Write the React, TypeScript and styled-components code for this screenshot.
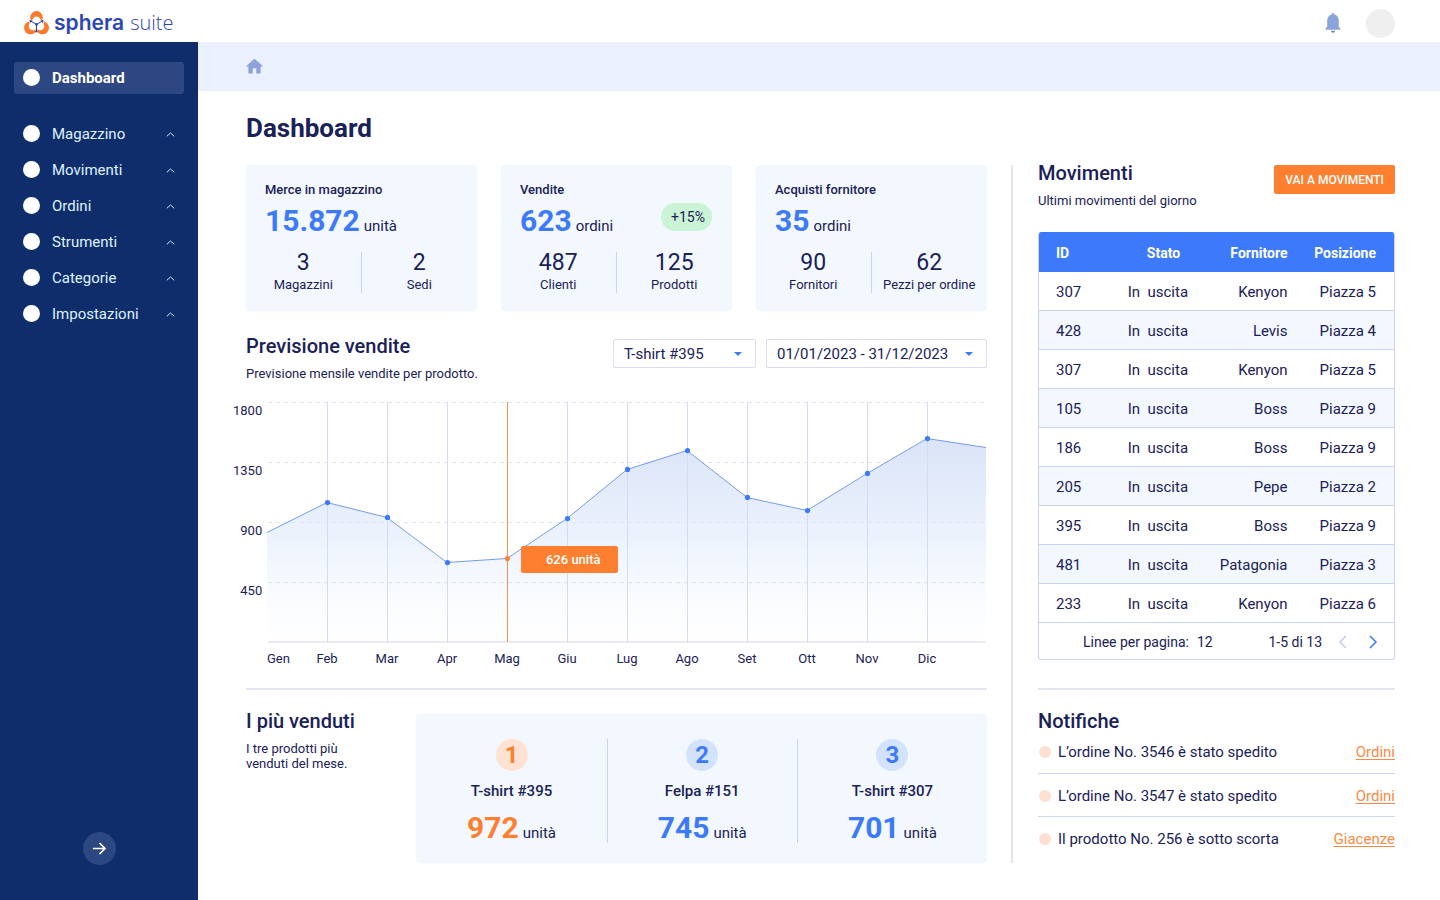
import React from "react";
import styled, { createGlobalStyle } from "styled-components";
import { MdHome } from "react-icons/md";

const c = {
  ink: "#1a2158",
  blue: "#3d7afb",
  orange: "#ff7f30",
  navy: "#0f2d6b",
  panel: "#f3f8ff",
  rule: "#e3e5f7",
  line: "#cdd3f0",
};

const GlobalStyle = createGlobalStyle`
  *, *::before, *::after { box-sizing: border-box; }
  body {
    margin: 0;
    background: #fff;
    color: ${c.ink};
    font-family: Roboto, "Liberation Sans", sans-serif;
    font-size: 15px;
  }
  h1, h2, h3, p, ul, dl, dd { margin: 0; padding: 0; }
  ul { list-style: none; }
  button, select { font-family: inherit; }
  svg { display: block; }
`;

/* ---------- shell ---------- */

const Shell = styled.div`
  min-height: 100vh;
  display: flex;
  flex-direction: column;
`;

const TopBar = styled.header`
  height: 42px;
  padding: 4px 45px 0 24px;
  display: flex;
  align-items: center;
  justify-content: space-between;
`;

const Brand = styled.a`
  display: flex;
  align-items: center;
  color: #2b45b5;
  text-decoration: none;
  line-height: 24px;
`;

const BrandStrong = styled.span`
  margin-left: 5px;
  font-family: Inter, sans-serif;
  font-size: 21px;
  font-weight: 600;
`;

const BrandLight = styled.span`
  margin-left: 6px;
  font-family: "Open Sans", sans-serif;
  font-size: 20px;
  font-weight: 300;
`;

const TopActions = styled.div`
  display: flex;
  align-items: center;
  gap: 25px;
`;

const PlainButton = styled.button`
  padding: 0;
  border: 0;
  background: none;
  color: inherit;
  cursor: pointer;
`;

const Avatar = styled(PlainButton)`
  width: 29px;
  height: 29px;
  border-radius: 50%;
  background: #efefef;
`;

const Body = styled.div`
  flex: 1;
  display: flex;
`;

const Sidebar = styled.nav`
  flex: none;
  width: 198px;
  padding: 20px 14px 35px;
  display: flex;
  flex-direction: column;
  align-items: stretch;
  background: ${c.navy};
`;

const NavList = styled.ul`
  margin-top: 24px;
  display: flex;
  flex-direction: column;
  gap: 4px;
`;

const NavItem = styled.button<{ $active?: boolean }>`
  width: 100%;
  height: 32px;
  padding: 0 9px;
  display: flex;
  align-items: center;
  gap: 12px;
  border: 0;
  border-radius: 3px;
  background: ${(p) => (p.$active ? "#2c4781" : "none")};
  color: ${(p) => (p.$active ? "#fff" : "#dff1ff")};
  font-size: 15px;
  font-weight: ${(p) => (p.$active ? 700 : 400)};
  text-align: left;
  cursor: pointer;
`;

const NavDot = styled.span`
  width: 17px;
  height: 17px;
  margin-bottom: 1px;
  border-radius: 50%;
  background: #fff;
`;

const NavLabel = styled.span`
  flex: 1;
`;

const ExpandButton = styled(PlainButton)`
  width: 33px;
  height: 33px;
  margin: auto auto 0;
  display: grid;
  place-items: center;
  border-radius: 50%;
  background: #2c4781;
  color: #fff;
`;

const Page = styled.div`
  flex: 1;
  min-width: 0;
`;

const Breadcrumb = styled.div`
  height: 49px;
  padding: 0 46px;
  display: flex;
  align-items: center;
  background: #eaf0fe;
`;

const HomeLink = styled.a`
  color: #8ba2dc;
`;

const Main = styled.main`
  padding: 21px 45px 37px 48px;
`;

const PageTitle = styled.h1`
  margin-bottom: 21px;
  font-size: 26px;
  line-height: 32px;
  font-weight: 700;
`;

const Columns = styled.div`
  display: grid;
  grid-template-columns: minmax(0, 741fr) minmax(0, 384fr);
  column-gap: 24px;
`;

const SideColumn = styled.div`
  padding-left: 25px;
  border-left: 2px solid ${c.rule};
`;

/* ---------- shared text ---------- */

const SectionTitle = styled.h2`
  font-size: 20px;
  line-height: 24px;
  font-weight: 500;
`;

const SectionNote = styled.p<{ $width?: number }>`
  max-width: ${(p) => (p.$width ? `${p.$width}px` : "none")};
  margin-top: 8px;
  font-size: 13px;
  line-height: ${(p) => (p.$width ? 15 : 16)}px;
`;

const Rule = styled.hr`
  height: 2px;
  margin: 0;
  border: 0;
  background: ${c.rule};
`;

const Amount = styled.p<{ $tone?: "orange" }>`
  line-height: 16px;
  white-space: nowrap;
  & > strong {
    margin-right: 4px;
    color: ${(p) => (p.$tone === "orange" ? c.orange : c.blue)};
    font-size: 30px;
    line-height: 30px;
    font-weight: 700;
  }
`;

/* ---------- summary cards ---------- */

const Cards = styled.div`
  display: grid;
  grid-template-columns: repeat(3, minmax(0, 1fr));
  gap: 24px;
`;

const Card = styled.section`
  padding: 16px 0 18px;
  border-radius: 4px;
  background: ${c.panel};
  box-shadow: 0 0 3px ${c.panel};
`;

const CardTitle = styled.h3`
  padding: 0 19px;
  font-size: 13px;
  line-height: 18px;
  font-weight: 500;
`;

const CardAmount = styled.div`
  height: 36px;
  margin: 4px 0 13px;
  padding: 0 20px 0 19px;
  display: flex;
  align-items: flex-start;
  justify-content: space-between;
  & > p {
    margin-top: 3px;
  }
`;

const Badge = styled.span`
  padding: 0 7px 0 10px;
  border-radius: 14px;
  background: #cbf3d5;
  font-size: 14px;
  line-height: 28px;
`;

const Stats = styled.dl`
  display: grid;
  grid-template-columns: 1fr 1fr;
  text-align: center;
`;

const Stat = styled.div`
  display: flex;
  flex-direction: column-reverse;
  gap: 3px;
  white-space: nowrap;
  &:first-child {
    border-right: 1px solid ${c.line};
  }
  & > dt {
    font-size: 13px;
    line-height: 16px;
  }
  & > dd {
    font-size: 23px;
    line-height: 22px;
  }
`;

/* ---------- forecast ---------- */

const ForecastHead = styled.div`
  margin: 23px 0 20px;
  display: flex;
  align-items: flex-start;
  justify-content: space-between;
`;

const Filters = styled.div`
  margin-top: 5px;
  display: flex;
  gap: 10px;
`;

const SelectBox = styled.label<{ $width: number }>`
  width: ${(p) => p.$width}px;
  height: 29px;
  padding-right: 13px;
  display: grid;
  grid-template-columns: minmax(0, 1fr);
  align-items: center;
  border: 1px solid #d9dcf6;
  border-radius: 2px;
  & > * {
    grid-area: 1 / 1;
  }
  & > svg {
    justify-self: end;
    pointer-events: none;
  }
`;

const Select = styled.select`
  width: 100%;
  height: 27px;
  padding: 0 0 0 10px;
  border: 0;
  appearance: none;
  background: none;
  color: ${c.ink};
  font-size: 15px;
`;

const Chart = styled.div`
  margin: 0 0 20px -13px;
  display: grid;
  grid-template-columns: 29px minmax(0, 1fr);
  column-gap: 5px;
  row-gap: 8px;
  font-size: 13px;
  line-height: 18px;
`;

const YAxis = styled.div`
  display: grid;
  grid-template-rows: repeat(4, 1fr);
  text-align: right;
`;

const Plot = styled.div`
  position: relative;
  & > svg {
    width: 100%;
    height: auto;
    overflow: visible;
  }
`;

const Tooltip = styled.div`
  position: absolute;
  top: 60%;
  left: calc(100% / 3 + 14px);
  padding: 0 17px 0 25px;
  border-radius: 2px;
  background: ${c.orange};
  color: #fff;
  font-weight: 500;
  line-height: 27px;
  white-space: nowrap;
`;

const XAxis = styled.div`
  grid-column: 2;
  display: grid;
  grid-template-columns: 1fr repeat(11, 2fr) 1fr;
  text-align: center;
  & > :first-child {
    text-align: left;
  }
`;

/* ---------- best sellers ---------- */

const BestSellers = styled.section`
  display: flex;
  justify-content: space-between;
`;

const BestIntro = styled.div`
  padding-top: 19px;
`;

const Podium = styled.ol`
  width: 77%;
  margin: 24px 0 0;
  padding: 25px 0 20px;
  display: grid;
  grid-template-columns: repeat(3, 1fr);
  border-radius: 4px;
  background: ${c.panel};
  box-shadow: 0 0 3px ${c.panel};
  list-style: none;
`;

const PodiumItem = styled.li`
  display: flex;
  flex-direction: column;
  align-items: center;
  & + & {
    border-left: 1px solid ${c.line};
  }
  & > h3 {
    margin: 10px 0 12px;
    font-size: 15px;
    line-height: 20px;
    font-weight: 500;
  }
`;

const Rank = styled.span<{ $first: boolean }>`
  width: 32px;
  border-radius: 50%;
  background: ${(p) => (p.$first ? "#ffe2d2" : "#d3e3fd")};
  color: ${(p) => (p.$first ? c.orange : c.blue)};
  font-size: 24px;
  line-height: 32px;
  font-weight: 700;
  text-align: center;
`;

/* ---------- movements ---------- */

const MovementsHead = styled.div`
  margin-bottom: 23px;
  display: flex;
  align-items: flex-start;
  justify-content: space-between;
`;

const MovementsIntro = styled.div`
  margin-top: -4px;
`;

const ActionButton = styled(PlainButton)`
  height: 29px;
  padding: 0 11px;
  border-radius: 2px;
  background: ${c.orange};
  color: #fff;
  font-size: 12px;
  font-weight: 500;
`;

const TableFrame = styled.div`
  margin-bottom: 28px;
  border: 1px solid ${c.line};
  border-top: 0;
  border-radius: 3px;
  overflow: hidden;
`;

const Table = styled.table`
  width: 100%;
  table-layout: fixed;
  border-collapse: separate;
  border-spacing: 0;
  text-align: right;
  white-space: pre;
  th,
  td {
    padding: 2px 0 0;
  }
  th {
    height: 40px;
    background: ${c.blue};
    color: #fff;
    font-size: 14px;
    font-weight: 700;
  }
  td {
    height: 39px;
    border-bottom: 1px solid #c9d5f0;
  }
  tbody tr:nth-child(even) {
    background: ${c.panel};
  }
  tr > :first-child {
    width: 20%;
    padding-left: 17px;
    text-align: left;
  }
  tr > :nth-child(2) {
    width: 22%;
  }
  th:nth-child(2) {
    padding-right: 8px;
  }
  tr > :nth-child(3) {
    width: 28%;
  }
  tr > :last-child {
    width: 30%;
    padding-right: 18px;
  }
`;

const Pager = styled.div`
  height: 36px;
  padding: 2px 16px 0 44px;
  display: flex;
  align-items: center;
  font-size: 14px;
  & > :nth-child(2) {
    margin-left: auto;
    margin-right: 16px;
  }
`;

const PageSize = styled.span`
  margin-left: 8px;
`;

const PagerButton = styled(PlainButton)<{ $tone: string }>`
  color: ${(p) => p.$tone};
  & + & {
    margin-left: 22px;
  }
`;

/* ---------- notifications ---------- */

const Notifications = styled.section`
  padding-top: 19px;
`;

const NoticeList = styled.ul`
  margin-top: -2px;
`;

const Notice = styled.li`
  height: 42px;
  display: flex;
  align-items: center;
  gap: 7px;
  & + & {
    height: 43px;
    padding-top: 2px;
    border-top: 1px solid ${c.line};
  }
`;

const NoticeDot = styled.span`
  width: 12px;
  height: 12px;
  margin: 0 0 1px 1px;
  border-radius: 50%;
  background: #ffe0d0;
`;

const NoticeLink = styled.a`
  margin-left: auto;
  color: #f98a45;
  text-underline-offset: 2px;
`;

/* ---------- drawings ---------- */

const LogoMark = () => (
  <svg width="25" height="24" viewBox="0 0 25 24" aria-hidden="true">
    <g fill="#fb7a2c">
      <circle cx="12.5" cy="6.4" r="6.3" />
      <circle cx="6.5" cy="16.8" r="6.5" />
      <circle cx="18.5" cy="16.8" r="6.5" />
    </g>
    <g fill="#fff">
      <circle cx="12.5" cy="9.8" r="4.300" />
      <circle cx="9" cy="15" r="4.300" />
      <circle cx="16" cy="15" r="4.300" />
      <path d="M12.5 16 10.300 24h4.400zM4 7.500l5 3-3 3zM21 7.500l-5 3 3 3z" />
    </g>
    <path stroke="#2b45b5" fill="none" d="M12.500 13.400V20M12.500 13.400 6.600 10M12.500 13.400 18.400 10" />
    <g fill="#2b45b5">
      <path d="M5.400 8.900l3.100.8-2.400 2.200zM19.600 8.900l-3.100.8 2.400 2.200zM12.500 18.400l1.700 2.800h-3.400z" />
      <circle cx="12.5" cy="13.4" r="1.3" />
    </g>
  </svg>
);

const Bell = () => (
  <svg width="16" height="20" viewBox="0 0 16 20" aria-hidden="true">
    <path
      fill="#8ba5da"
      d="M8 0a1.3 1.3 0 0 0-1.3 1.4C4 2 2.2 4.2 2.2 7v6.6L.6 15.4v1.3h14.8v-1.3l-1.6-1.8V7c0-2.8-1.8-5-4.5-5.6A1.3 1.3 0 0 0 8 0z"
    />
    <path fill="#7486b0" d="M5.9 17.8h4.2a2.1 1.9 0 0 1-4.2 0z" />
  </svg>
);

const ChevronUp = () => (
  <svg width="9" height="5" viewBox="0 0 9 5" fill="none" stroke="#cfe3fa" aria-hidden="true">
    <path d="M.8 4.3l3.7-3.3 3.7 3.3" />
  </svg>
);

const ArrowRight = () => (
  <svg width="14" height="14" viewBox="0 0 14 14" fill="none" stroke="currentColor" strokeWidth="1.6" aria-hidden="true">
    <path d="M1 6.500h11.500M7.500 1 13 6.500 7.500 12" />
  </svg>
);

const Caret = () => (
  <svg width="8" height="4" viewBox="0 0 8 4" aria-hidden="true">
    <path fill={c.blue} d="M0 0h8L4 4z" />
  </svg>
);

const Angle = ({ left }: { left?: boolean }) => (
  <svg width="9" height="14" viewBox="0 0 9 14" fill="none" stroke="currentColor" strokeWidth="1.5" aria-hidden="true">
    <path d={left ? "M8 1 2 7l6 6" : "M1 1l6 6-6 6"} />
  </svg>
);

/* ---------- data ---------- */

const sections = ["Magazzino", "Movimenti", "Ordini", "Strumenti", "Categorie", "Impostazioni"];

const cards = [
  { title: "Merce in magazzino", value: "15.872", unit: "unità", stats: [["3", "Magazzini"], ["2", "Sedi"]] },
  { title: "Vendite", value: "623", unit: "ordini", badge: "+15%", stats: [["487", "Clienti"], ["125", "Prodotti"]] },
  { title: "Acquisti fornitore", value: "35", unit: "ordini", stats: [["90", "Fornitori"], ["62", "Pezzi per ordine"]] },
];

const months = ["Gen", "Feb", "Mar", "Apr", "Mag", "Giu", "Lug", "Ago", "Set", "Ott", "Nov", "Dic"];

/* Units forecast for each month, with the value at the right edge last. */
const forecast = [821, 1046, 934, 596, 626, 926, 1294, 1436, 1084, 986, 1264, 1526, 1459];
const selected = 4;

const movements = [
  ["307", "Kenyon", "Piazza 5"],
  ["428", "Levis", "Piazza 4"],
  ["307", "Kenyon", "Piazza 5"],
  ["105", "Boss", "Piazza 9"],
  ["186", "Boss", "Piazza 9"],
  ["205", "Pepe", "Piazza 2"],
  ["395", "Boss", "Piazza 9"],
  ["481", "Patagonia", "Piazza 3"],
  ["233", "Kenyon", "Piazza 6"],
];

const notices = [
  ["L’ordine No. 3546 è stato spedito", "Ordini"],
  ["L’ordine No. 3547 è stato spedito", "Ordini"],
  ["Il prodotto No. 256 è sotto scorta", "Giacenze"],
];

const best = [
  ["T-shirt #395", "972"],
  ["Felpa #151", "745"],
  ["T-shirt #307", "701"],
];

const ForecastPlot = () => {
  const points = forecast.map((v, i) => [Math.min(i * 60, 719), 240 - (v * 240) / 1800]);
  const path = points.map(([x, y]) => `${x},${y.toFixed(1)}`).join(" L");
  return (
    <svg viewBox="0 0 720 240" role="img" aria-label="Previsione mensile vendite">
      <defs>
        <linearGradient id="area" x1="0" y1="36" x2="0" y2="240" gradientUnits="userSpaceOnUse">
          <stop offset="0" stopColor="#dae4f8" />
          <stop offset="0.5" stopColor="#edf3fd" />
          <stop offset="0.8" stopColor="#fafcff" />
          <stop offset="1" stopColor="#ffffff" />
        </linearGradient>
      </defs>
      <path d={`M0,240 L${path} L719,240Z`} fill="url(#area)" />
      <g stroke="#dfe4f2" strokeDasharray="4 4">
        {[0, 60, 120, 180].map((y) => (
          <line key={y} x1="1" x2="719" y1={y + 0.5} y2={y + 0.5} />
        ))}
      </g>
      <line x1="1" x2="719" y1="240" y2="240" stroke="#e9eaf1" strokeWidth="2" />
      {points.slice(1, 12).map(([x], i) => (
        <rect key={x} x={x} y="0" width="1" height="240" fill={i + 1 === selected ? "#f5914f" : "#d5dcf0"} />
      ))}
      <path d={`M${path}`} fill="none" stroke="#769bea" />
      {points.slice(1, 12).map(([x, y], i) => (
        <circle key={x} cx={x + 0.5} cy={y} r="2.6" fill={i + 1 === selected ? c.orange : c.blue} />
      ))}
    </svg>
  );
};

export default function App() {
  return (
    <Shell>
      <GlobalStyle />
      <TopBar>
        <Brand href="#">
          <LogoMark />
          <BrandStrong>sphera</BrandStrong>
          <BrandLight>suite</BrandLight>
        </Brand>
        <TopActions>
          <PlainButton aria-label="Notifiche">
            <Bell />
          </PlainButton>
          <Avatar aria-label="Profilo" />
        </TopActions>
      </TopBar>
      <Body>
        <Sidebar>
          <NavItem $active>
            <NavDot />
            <NavLabel>Dashboard</NavLabel>
          </NavItem>
          <NavList>
            {sections.map((name) => (
              <li key={name}>
                <NavItem>
                  <NavDot />
                  <NavLabel>{name}</NavLabel>
                  <ChevronUp />
                </NavItem>
              </li>
            ))}
          </NavList>
          <ExpandButton aria-label="Espandi menu">
            <ArrowRight />
          </ExpandButton>
        </Sidebar>
        <Page>
          <Breadcrumb>
            <HomeLink href="#" aria-label="Home">
              <MdHome size={21} />
            </HomeLink>
          </Breadcrumb>
          <Main>
            <PageTitle>Dashboard</PageTitle>
            <Columns>
              <div>
                <Cards>
                  {cards.map((card) => (
                    <Card key={card.title}>
                      <CardTitle>{card.title}</CardTitle>
                      <CardAmount>
                        <Amount>
                          <strong>{card.value}</strong>
                          {card.unit}
                        </Amount>
                        {card.badge && <Badge>{card.badge}</Badge>}
                      </CardAmount>
                      <Stats>
                        {card.stats.map(([value, label]) => (
                          <Stat key={label}>
                            <dt>{label}</dt>
                            <dd>{value}</dd>
                          </Stat>
                        ))}
                      </Stats>
                    </Card>
                  ))}
                </Cards>

                <section>
                  <ForecastHead>
                    <div>
                      <SectionTitle>Previsione vendite</SectionTitle>
                      <SectionNote>Previsione mensile vendite per prodotto.</SectionNote>
                    </div>
                    <Filters>
                      <SelectBox $width={143}>
                        <Select aria-label="Prodotto">
                          <option>T-shirt #395</option>
                        </Select>
                        <Caret />
                      </SelectBox>
                      <SelectBox $width={221}>
                        <Select aria-label="Periodo">
                          <option>01/01/2023 - 31/12/2023</option>
                        </Select>
                        <Caret />
                      </SelectBox>
                    </Filters>
                  </ForecastHead>
                  <Chart>
                    <YAxis>
                      {[1800, 1350, 900, 450].map((v) => (
                        <span key={v}>{v}</span>
                      ))}
                    </YAxis>
                    <Plot>
                      <ForecastPlot />
                      <Tooltip>626 unità</Tooltip>
                    </Plot>
                    <XAxis>
                      {months.map((m) => (
                        <span key={m}>{m}</span>
                      ))}
                    </XAxis>
                  </Chart>
                </section>

                <Rule />

                <BestSellers>
                  <BestIntro>
                    <SectionTitle>I più venduti</SectionTitle>
                    <SectionNote $width={110}>I tre prodotti più venduti del mese.</SectionNote>
                  </BestIntro>
                  <Podium>
                    {best.map(([name, sold], i) => (
                      <PodiumItem key={name}>
                        <Rank $first={i === 0}>{i + 1}</Rank>
                        <h3>{name}</h3>
                        <Amount $tone={i === 0 ? "orange" : undefined}>
                          <strong>{sold}</strong>
                          unità
                        </Amount>
                      </PodiumItem>
                    ))}
                  </Podium>
                </BestSellers>
              </div>

              <SideColumn>
                <MovementsHead>
                  <MovementsIntro>
                    <SectionTitle>Movimenti</SectionTitle>
                    <SectionNote>Ultimi movimenti del giorno</SectionNote>
                  </MovementsIntro>
                  <ActionButton>VAI A MOVIMENTI</ActionButton>
                </MovementsHead>
                <TableFrame>
                  <Table>
                    <thead>
                      <tr>
                        <th scope="col">ID</th>
                        <th scope="col">Stato</th>
                        <th scope="col">Fornitore</th>
                        <th scope="col">Posizione</th>
                      </tr>
                    </thead>
                    <tbody>
                      {movements.map(([id, supplier, place], i) => (
                        <tr key={i}>
                          <td>{id}</td>
                          <td>{"In  uscita"}</td>
                          <td>{supplier}</td>
                          <td>{place}</td>
                        </tr>
                      ))}
                    </tbody>
                  </Table>
                  <Pager>
                    <span>
                      Linee per pagina:<PageSize>12</PageSize>
                    </span>
                    <span>1-5 di 13</span>
                    <PagerButton $tone="#c3cbf0" aria-label="Pagina precedente">
                      <Angle left />
                    </PagerButton>
                    <PagerButton $tone={c.blue} aria-label="Pagina successiva">
                      <Angle />
                    </PagerButton>
                  </Pager>
                </TableFrame>
                <Rule />
                <Notifications>
                  <SectionTitle>Notifiche</SectionTitle>
                  <NoticeList>
                    {notices.map(([text, link]) => (
                      <Notice key={text}>
                        <NoticeDot />
                        <span>{text}</span>
                        <NoticeLink href="#">{link}</NoticeLink>
                      </Notice>
                    ))}
                  </NoticeList>
                </Notifications>
              </SideColumn>
            </Columns>
          </Main>
        </Page>
      </Body>
    </Shell>
  );
}
